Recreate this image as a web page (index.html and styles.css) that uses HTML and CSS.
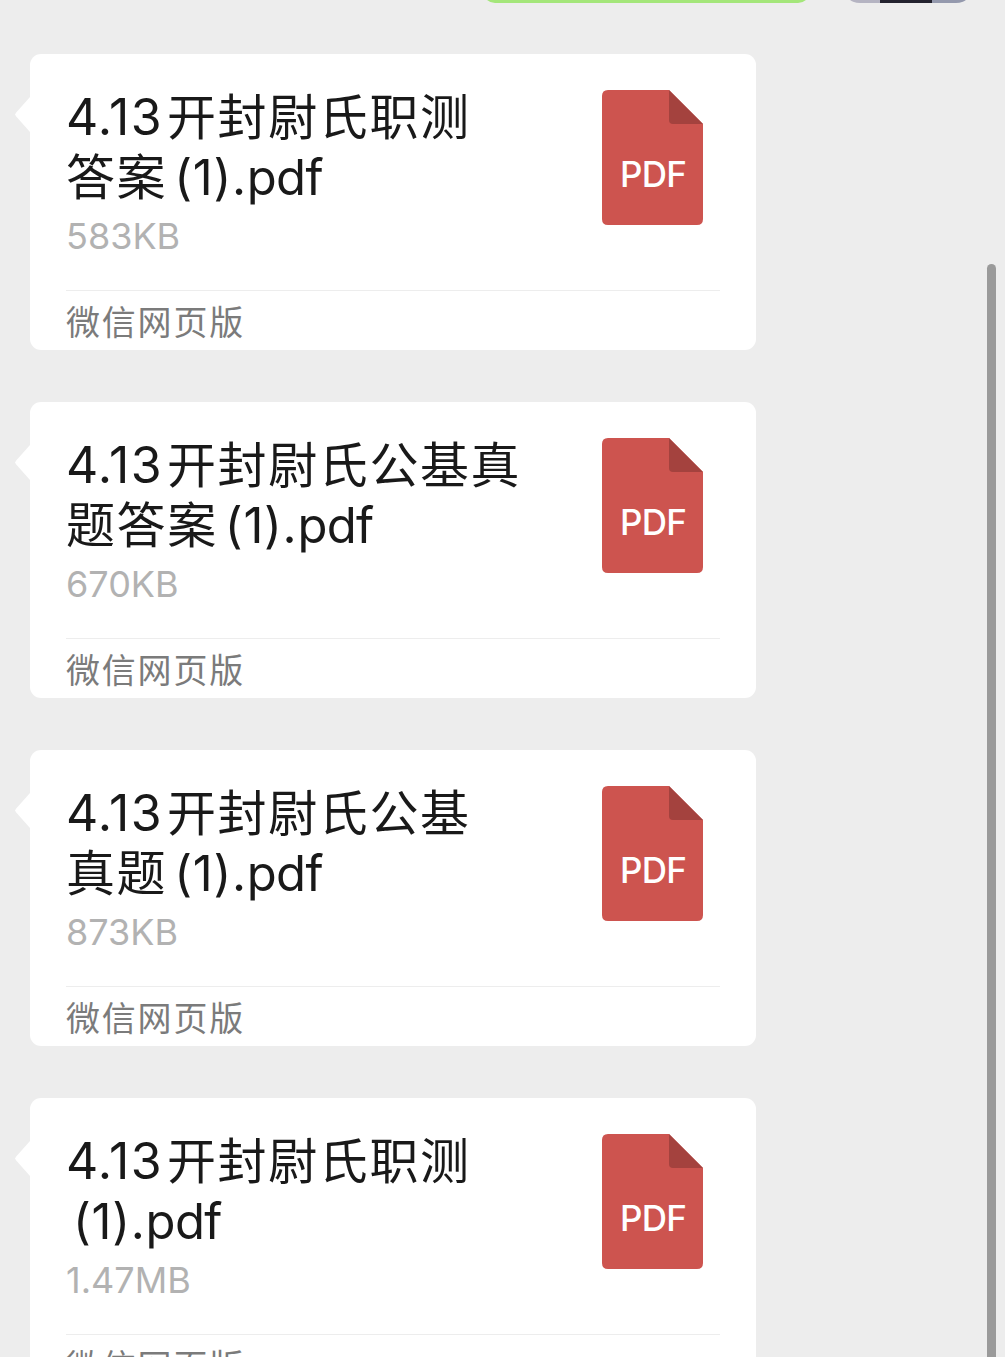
FILE: index.html
```
<!DOCTYPE html>
<html lang="zh-CN">
<head>
  <meta charset="utf-8">
  <title>微信</title>
  <link rel="stylesheet" href="styles.css">
</head>
<body>
  <div class="chat">
    <div class="sent">
      <div class="sent-bubble"></div>
      <div class="avatar"></div>
    </div>
    <div class="card">
      <div class="file">
        <div class="info">
          <div class="title"><span class="num">4.13</span>开封尉氏职测<br>答案<span class="tail"><span class="copy">(1).</span>pdf</span></div>
          <div class="size">583KB</div>
        </div>
        <svg class="icon" viewBox="0 0 101 135">
          <path fill="#cd544f" d="M6 0H67L101 34V129Q101 135 95 135H6Q0 135 0 129V6Q0 0 6 0Z"/>
          <path fill="#a4423e" d="M67 0L101 34H71Q67 34 67 30Z"/>
          <text x="18" y="97" textLength="67">PDF</text>
        </svg>
      </div>
      <div class="source">微信网页版</div>
    </div>
    <div class="card">
      <div class="file">
        <div class="info">
          <div class="title"><span class="num">4.13</span>开封尉氏公基真<br>题答案<span class="tail"><span class="copy">(1).</span>pdf</span></div>
          <div class="size">670KB</div>
        </div>
        <svg class="icon" viewBox="0 0 101 135">
          <path fill="#cd544f" d="M6 0H67L101 34V129Q101 135 95 135H6Q0 135 0 129V6Q0 0 6 0Z"/>
          <path fill="#a4423e" d="M67 0L101 34H71Q67 34 67 30Z"/>
          <text x="18" y="97" textLength="67">PDF</text>
        </svg>
      </div>
      <div class="source">微信网页版</div>
    </div>
    <div class="card">
      <div class="file">
        <div class="info">
          <div class="title"><span class="num">4.13</span>开封尉氏公基<br>真题<span class="tail"><span class="copy">(1).</span>pdf</span></div>
          <div class="size">873KB</div>
        </div>
        <svg class="icon" viewBox="0 0 101 135">
          <path fill="#cd544f" d="M6 0H67L101 34V129Q101 135 95 135H6Q0 135 0 129V6Q0 0 6 0Z"/>
          <path fill="#a4423e" d="M67 0L101 34H71Q67 34 67 30Z"/>
          <text x="18" y="97" textLength="67">PDF</text>
        </svg>
      </div>
      <div class="source">微信网页版</div>
    </div>
    <div class="card">
      <div class="file">
        <div class="info">
          <div class="title"><span class="num">4.13</span>开封尉氏职测<br><span class="tail"><span class="copy">(1).</span>pdf</span></div>
          <div class="size">1.47MB</div>
        </div>
        <svg class="icon" viewBox="0 0 101 135">
          <path fill="#cd544f" d="M6 0H67L101 34V129Q101 135 95 135H6Q0 135 0 129V6Q0 0 6 0Z"/>
          <path fill="#a4423e" d="M67 0L101 34H71Q67 34 67 30Z"/>
          <text x="18" y="97" textLength="67">PDF</text>
        </svg>
      </div>
      <div class="source">微信网页版</div>
    </div>
  </div>
  <div class="scrollbar"></div>
</body>
</html>
```
FILE: styles.css
```
* {
  box-sizing: border-box;
}
html {
  overflow: hidden;
}
body {
  margin: 0;
  height: 1357px;
  overflow: hidden;
  position: relative;
  background: #ededed;
  font-family: Inter, "Noto Sans CJK SC", sans-serif;
}
.chat {
  height: 1357px;
  padding-left: 30px;
  overflow: hidden;
}

/* bottom edge of the previous sent message */
.sent {
  display: flex;
  align-items: flex-end;
  height: 3px;
  margin-bottom: 51px;
  padding-left: 453px;
  overflow: hidden;
}
.sent-bubble {
  flex: none;
  width: 327px;
  height: 60px;
  margin-right: 32px;
  border-radius: 12px;
  background: #a4e67a;
}
.avatar {
  flex: none;
  width: 132px;
  height: 120px;
  border-radius: 18px;
  background: linear-gradient(90deg, #b5b4c2 38px, #23222e 38px, #23222e 90px, #9499ad 90px);
}

.card {
  position: relative;
  width: 726px;
  height: 296px;
  margin-bottom: 52px;
  padding: 0 36px;
  border-radius: 11px;
  background: #fff;
}
.card::before {
  content: "";
  position: absolute;
  left: -15px;
  top: 43px;
  width: 15px;
  height: 35px;
  background: #fff;
  clip-path: polygon(100% 0, 8% 44%, 0 50%, 8% 56%, 100% 100%);
}
.file {
  display: flex;
  justify-content: space-between;
  height: 237px;
  padding: 34px 17px 0 0;
  border-bottom: 1px solid #ededed;
}
.title {
  font-size: 49px;
  line-height: 60px;
  letter-spacing: 1.6px;
  color: #191919;
  white-space: nowrap;
}
.num {
  display: inline-block;
  width: 101px;
  font-size: 50px;
  line-height: 1;
  letter-spacing: 1.2px;
}
.tail {
  font-size: 49px;
  line-height: 1;
  letter-spacing: -0.7px;
  margin-left: 7px;
}
.copy {
  letter-spacing: 0.7px;
}
.size {
  margin-top: -2px;
  line-height: 60px;
  font-size: 36px;
  color: #b2b2b2;
}
.icon {
  width: 101px;
  height: 135px;
  margin-top: 2px;
}
.icon text {
  font-family: Inter, sans-serif;
  font-size: 35px;
  font-weight: 550;
  fill: #fff;
}
.source {
  padding-top: 2px;
  line-height: 59px;
  font-size: 34px;
  letter-spacing: 1.8px;
  color: #7b7b7b;
}
.scrollbar {
  position: absolute;
  left: 987px;
  top: 264px;
  width: 9px;
  height: 1093px;
  border-radius: 5px 5px 0 0;
  background: #9a9a9a;
}
```
